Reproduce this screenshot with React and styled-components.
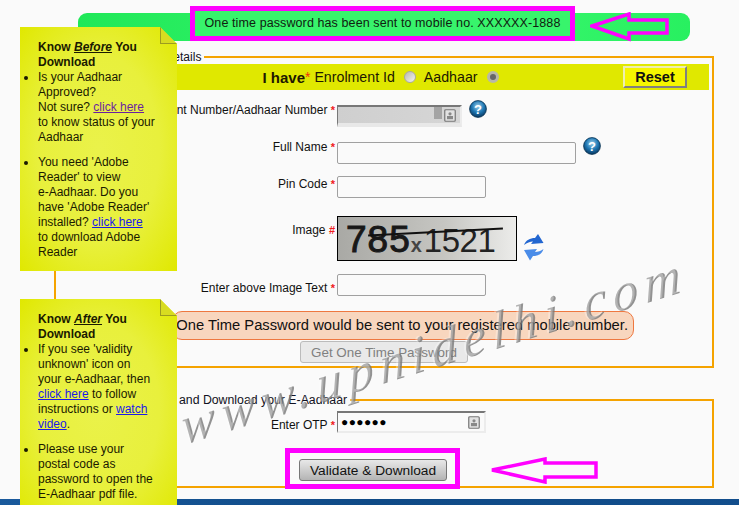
import React from 'react'
import styled, { createGlobalStyle } from 'styled-components'

const GlobalStyle = createGlobalStyle`
    html, body {
        margin: 0;
        padding: 0;
        background: #fafafa;
    }
    body {
        font-family: "Liberation Sans", Arial, sans-serif;
        font-size: 12px;
        color: #111;
    }
`

function HelpIcon() {
    return (
        <svg width="18" height="18" viewBox="0 0 18 18">
            <defs>
                <radialGradient id="helpBall" cx="50%" cy="35%" r="65%">
                    <stop offset="0%" stopColor="#9fd0ea" />
                    <stop offset="55%" stopColor="#1f78b4" />
                    <stop offset="100%" stopColor="#07365f" />
                </radialGradient>
            </defs>
            <circle cx="9" cy="9" r="8.4" fill="url(#helpBall)" stroke="#06304f" strokeWidth="0.8" />
            <text x="9" y="14" textAnchor="middle" fontSize="13" fontWeight="700" fontFamily="Liberation Sans" fill="#fff">?</text>
        </svg>
    )
}

function RefreshIcon() {
    return (
        <svg width="21" height="28" viewBox="0 0 21 28">
            <path d="M0 12 C2 7 6 5 11 5 L14 1 L19.5 10 L7 11 L9 8.5 C6 8.5 3 10 0 12 Z" fill="#2266d0" />
            <path d="M19.5 16 C18 21 14 23 9 23 L6 27.5 L0 17 L13 16 L11 19 C14 19 17 18 19.5 16 Z" fill="#4a8ce8" />
        </svg>
    )
}

function ContactIcon() {
    return (
        <svg width="12" height="13" viewBox="0 0 12 13">
            <rect x="0.75" y="0.75" width="10.5" height="11.5" rx="1" fill="#e2e2e2" stroke="#777" strokeWidth="1.2" />
            <circle cx="6" cy="4.8" r="1.6" fill="#888" />
            <rect x="3" y="7" width="6" height="3.2" fill="#888" />
        </svg>
    )
}

function Arrow({ width, height, points }) {
    return (
        <svg width={width} height={height} viewBox={`0 0 ${width} ${height}`}>
            <polygon points={points} fill="none" stroke="#ff00ff" strokeWidth="3.5" />
        </svg>
    )
}

function StickyNote({ top, height, title, emphasis, children }) {
    return (
        <Note $top={top} $height={height}>
            <NoteTitle>Know <em>{emphasis}</em> {title}</NoteTitle>
            <NoteList>{children}</NoteList>
        </Note>
    )
}

function Row({ top, labelTop, label, mark = '*', children }) {
    return (
        <FormRow $top={top}>
            <FieldLabel $top={labelTop}>{label} <Mark>{mark}</Mark></FieldLabel>
            <FieldCell>{children}</FieldCell>
        </FormRow>
    )
}

export default function App() {
    return (
        <Page>
            <GlobalStyle />

            <Banner>
                <BannerMessage>One time password has been sent to mobile no. XXXXXX-1888</BannerMessage>
                <BannerArrow>
                    <Arrow width={80} height={30} points="2,14 39,2 39,8 77,8 77,21 39,21 39,27" />
                </BannerArrow>
            </Banner>

            <DetailsSet>
                <SetLegend $left={56}>Resident Details</SetLegend>
                <HaveBar>
                    <span />
                    <HaveChoice>
                        <strong>I have</strong><HaveMark>*</HaveMark> Enrolment Id
                        <Radio />
                        Aadhaar
                        <Radio $checked />
                    </HaveChoice>
                    <ResetButton>Reset</ResetButton>
                </HaveBar>

                <Row top={15} labelTop={-2} label="Enrolment Number/Aadhaar Number">
                    <AutoField $width={125} $shaded>
                        <ShadedThumb />
                        <ContactIcon />
                    </AutoField>
                    <HelpSlot $shift={-5}><HelpIcon /></HelpSlot>
                </Row>
                <Row top={15} labelTop={-2} label="Full Name">
                    <TextField $width={239} />
                    <HelpSlot $shift={-5}><HelpIcon /></HelpSlot>
                </Row>
                <Row top={12} labelTop={1} label="Pin Code">
                    <TextField $width={149} />
                </Row>
                <Row top={18} labelTop={7} label="Image" mark="#">
                    <Captcha>
                        <CaptchaBold>785</CaptchaBold>
                        <CaptchaNoise>x</CaptchaNoise>
                        <CaptchaThin>1521</CaptchaThin>
                    </Captcha>
                    <RefreshSlot><RefreshIcon /></RefreshSlot>
                </Row>
                <Row top={13} labelTop={7} label="Enter above Image Text">
                    <TextField $width={149} />
                </Row>

                <NoticePill>One Time Password would be sent to your registered mobile number.</NoticePill>
                <OtpButtonRow>
                    <GetOtpButton>Get One Time Password</GetOtpButton>
                </OtpButtonRow>
            </DetailsSet>

            <DownloadSet>
                <SetLegend $left={5} $size={12.3}>Enter OTP Received and Download your E-Aadhaar</SetLegend>
                <Row top={4} labelTop={7} label="Enter OTP">
                    <AutoField $width={149}>
                        <OtpDots>●●●●●●</OtpDots>
                        <ContactIcon />
                    </AutoField>
                </Row>
                <ActionRow>
                    <ValidateFrame>
                        <ValidateButton>Validate &amp; Download</ValidateButton>
                    </ValidateFrame>
                    <ActionArrow>
                        <Arrow width={108} height={27} points="2,13 55,2 55,6 106,6 106,20 55,20 55,25" />
                    </ActionArrow>
                </ActionRow>
            </DownloadSet>

            <Footer />

            <Watermark>www.upnidelhi.com</Watermark>

            <StickyNote top={27} height={244} emphasis="Before" title="You Download">
                <li>
                    Is your Aadhaar<br />
                    Approved?<br />
                    Not sure? <NoteLink $visited>click here</NoteLink><br />
                    to know status of your<br />
                    Aadhaar
                </li>
                <li>
                    You need 'Adobe<br />
                    Reader' to view<br />
                    e-Aadhaar. Do you<br />
                    have 'Adobe Reader'<br />
                    installed? <NoteLink>click here</NoteLink><br />
                    to download Adobe<br />
                    Reader
                </li>
            </StickyNote>

            <StickyNote top={299} height={220} emphasis="After" title="You Download">
                <li>
                    If you see 'validity<br />
                    unknown' icon on<br />
                    your e-Aadhaar, then<br />
                    <NoteLink>click here</NoteLink> to follow<br />
                    instructions or <NoteLink>watch</NoteLink><br />
                    <NoteLink>video</NoteLink>.
                </li>
                <li>
                    Please use your<br />
                    postal code as<br />
                    password to open the<br />
                    E-Aadhaar pdf file.
                </li>
            </StickyNote>
        </Page>
    )
}

const Page = styled.div`
    position: relative;
    display: flex;
    flex-direction: column;
    width: 739px;
    height: 505px;
    padding-top: 13px;
    box-sizing: border-box;
    overflow: hidden;
    background: #fafafa;
`

const Banner = styled.div`
    display: flex;
    align-items: center;
    flex: none;
    width: 612px;
    height: 28px;
    margin-left: 78px;
    padding-left: 112px;
    box-sizing: border-box;
    border-radius: 9px;
    background: linear-gradient(90deg, #1fe858, #3cf870 60%, #28f060);
`

const BannerMessage = styled.div`
    flex: none;
    width: 385px;
    height: 35px;
    margin-top: -7px;
    box-sizing: border-box;
    border: 5px solid #ff00ff;
    background: #38f46c;
    line-height: 25px;
    text-align: center;
    font-size: 12.5px;
    letter-spacing: 0.1px;
    color: #102010;
`

const BannerArrow = styled.div`
    display: flex;
    margin-left: 15px;
    margin-top: -1px;
`

const FieldSet = styled.fieldset`
    flex: none;
    margin: 0 25px 0 54px;
    padding: 0;
    border: 2px solid #f5a300;
    min-width: 0;
`

const DetailsSet = styled(FieldSet)`
    height: 318px;
    margin-top: 9px;
    box-sizing: border-box;
`

const DownloadSet = styled(FieldSet)`
    height: 95px;
    margin-top: 25px;
    box-sizing: border-box;
`

const SetLegend = styled.legend`
    margin-left: ${p => p.$left}px;
    padding: 0 3px 0 2px;
    font-size: ${p => p.$size || 12}px;
    line-height: 14px;
    color: #112;
`

const HaveBar = styled.div`
    display: grid;
    grid-template-columns: 1fr auto 1fr;
    align-items: center;
    height: 26px;
    margin: 0 3px 0 0;
    background: #e0e800;
`

const HaveChoice = styled.div`
    display: flex;
    align-items: center;
    margin-left: 4px;
    white-space: pre;
    font-size: 14.2px;
    color: #201800;

    strong {
        font-size: 15px;
    }
`

const HaveMark = styled.span`
    color: #f03010;
    font-size: 14px;
`

const Radio = styled.span`
    display: inline-block;
    width: 12px;
    height: 12px;
    margin: 0 8px 0 9px;
    box-sizing: border-box;
    border-radius: 50%;
    border: ${p => (p.$checked ? '3px solid #b8b8a8' : '1px solid #a8a8a0')};
    background: ${p => (p.$checked ? '#666' : 'linear-gradient(135deg, #b8b8b0, #f4f4f0)')};
`

const ResetButton = styled.button`
    justify-self: end;
    width: 64px;
    height: 22px;
    margin-right: 22px;
    padding: 0;
    box-sizing: border-box;
    border: 2px solid;
    border-color: #eeeeb0 #808080 #808080 #eeeeb0;
    background: #f6f600;
    font-family: "Liberation Sans", Arial, sans-serif;
    font-size: 14.5px;
    font-weight: 700;
    color: #111;
`

const FormRow = styled.div`
    display: grid;
    grid-template-columns: 279px 1fr;
    column-gap: 2px;
    margin-top: ${p => p.$top}px;
`

const FieldLabel = styled.div`
    margin-top: ${p => p.$top}px;
    text-align: right;
    white-space: nowrap;
    font-size: 12px;
    line-height: 15px;
`

const Mark = styled.span`
    color: #f02020;
    font-weight: 700;
    font-size: 11px;
`

const FieldCell = styled.div`
    display: flex;
    align-items: flex-start;
`

const TextField = styled.div`
    width: ${p => p.$width}px;
    height: 22px;
    box-sizing: border-box;
    border: 1px solid #a0a0a0;
    border-radius: 2px;
    background: #fafafa;
`

const AutoField = styled.div`
    display: flex;
    align-items: center;
    justify-content: space-between;
    width: ${p => p.$width}px;
    height: 22px;
    padding: 0 4px 0 3px;
    box-sizing: border-box;
    border-top: 2px solid #777;
    border-left: 1px solid #777;
    border-bottom: ${p => (p.$shaded ? '4px solid #e8e8e8' : '2px solid #ececec')};
    border-right: 2px solid #ececec;
    background: ${p => (p.$shaded ? 'linear-gradient(90deg, #cfcfcf, #d6d6d6)' : '#fafafa')};
`

const ShadedThumb = styled.span`
    flex: none;
    width: 8px;
    height: 12px;
    margin: -4px 2px 0 auto;
    background: #a4a4a4;
`

const OtpDots = styled.span`
    font-size: 12px;
    letter-spacing: 0.4px;
    color: #000;
`

const HelpSlot = styled.div`
    display: flex;
    margin-left: 7px;
    margin-top: ${p => p.$shift}px;
`

const RefreshSlot = styled.div`
    display: flex;
    margin-left: 7px;
    margin-top: 17px;
`

const Captcha = styled.div`
    position: relative;
    display: flex;
    align-items: baseline;
    overflow: hidden;
    width: 180px;
    height: 45px;
    padding-left: 8px;
    box-sizing: border-box;
    border: 1px solid #000;
    background: linear-gradient(90deg, #a9a9a5, #c6c6c2 60%, #ececea);
    color: #181818;
    white-space: nowrap;

    &::after {
        content: "";
        position: absolute;
        left: 30px;
        top: 14px;
        width: 135px;
        height: 1.5px;
        background: #111;
        transform: rotate(-3deg);
    }
`

const CaptchaBold = styled.span`
    font-size: 37px;
    line-height: 46px;
    letter-spacing: 1px;
    -webkit-text-stroke: 1px #181818;
`

const CaptchaNoise = styled.span`
    font-size: 20px;
    font-weight: 700;
    color: #444;
    margin: 0 2px 0 0;
`

const CaptchaThin = styled.span`
    font-size: 33px;
    letter-spacing: -0.5px;
    color: #222;
`

const NoticePill = styled.div`
    width: 462px;
    height: 29px;
    margin: 15px 0 0 116px;
    padding-right: 5px;
    box-sizing: border-box;
    border: 1px solid #ee7840;
    border-radius: 10px;
    background: #f8d6be;
    line-height: 27px;
    text-align: right;
    white-space: nowrap;
    font-size: 14.75px;
    color: #111;
`

const OtpButtonRow = styled.div`
    margin: 1px 0 0 244px;
`

const GetOtpButton = styled.button`
    width: 168px;
    height: 22px;
    padding: 0;
    border: 1px solid #bbb;
    border-radius: 3px;
    background: #e9e9e9;
    font-family: "Liberation Sans", Arial, sans-serif;
    font-size: 13.4px;
    color: #808080;
`

const ActionRow = styled.div`
    display: flex;
    align-items: flex-start;
    margin: 15px 0 -3px 229px;
`

const ValidateFrame = styled.div`
    flex: none;
    width: 175px;
    height: 41px;
    padding: 6px 8px 3px 9px;
    box-sizing: border-box;
    border: 5px solid #ff00ff;
`

const ValidateButton = styled.button`
    width: 148px;
    height: 22px;
    padding: 0;
    border: 1px solid #777;
    border-radius: 3px;
    background: linear-gradient(180deg, #e8e8e8, #b4b4b4);
    font-family: "Liberation Sans", Arial, sans-serif;
    font-size: 13.7px;
    color: #111;
`

const ActionArrow = styled.div`
    display: flex;
    margin: 9px 0 0 30px;
`

const Footer = styled.div`
    flex: none;
    height: 6px;
    margin-top: auto;
    background: linear-gradient(90deg, #1a5a9c, #0f4a86 50%, #124e8c);
`

const Note = styled.aside`
    position: absolute;
    left: 20px;
    top: ${p => p.$top}px;
    width: 157px;
    height: ${p => p.$height}px;
    padding: 13px 18px 0 18px;
    box-sizing: border-box;
    clip-path: polygon(0 0, 140px 0, 157px 17px, 157px 100%, 0 100%);
    background: radial-gradient(ellipse at 50% 50%, #eaf24a 0%, #e8f03c 55%, #e0e800 100%);
    font-size: 12px;
    line-height: 15px;
    color: #1a1a00;

    &::after {
        content: "";
        position: absolute;
        left: 140px;
        top: 0;
        width: 17px;
        height: 17px;
        box-sizing: border-box;
        background: linear-gradient(45deg, #d8dc20 50%, transparent 50%);
        border-left: 1px solid #9c9c20;
        border-bottom: 1px solid #9c9c20;
    }
`

const NoteTitle = styled.div`
    font-weight: 700;

    em {
        text-decoration: underline;
    }
`

const NoteList = styled.ul`
    margin: 0 0 0 -18px;
    padding: 0 0 0 18px;
    list-style: disc;
    white-space: nowrap;

    li {
        margin-bottom: 10px;
    }
`

const NoteLink = styled.a`
    color: ${p => (p.$visited ? '#6a1fa0' : '#1a1ae8')};
    text-decoration: underline;
`

const Watermark = styled.div`
    position: absolute;
    left: 180px;
    top: 397px;
    transform: rotate(-17deg) skewX(-12deg);
    transform-origin: 0 50%;
    white-space: nowrap;
    pointer-events: none;
    font-family: "Liberation Serif", serif;
    font-style: italic;
    font-size: 52px;
    letter-spacing: 7px;
    color: rgba(255, 255, 255, 0.3);
    text-shadow: 2px 1px 0 rgba(120, 120, 120, 0.8);
`
